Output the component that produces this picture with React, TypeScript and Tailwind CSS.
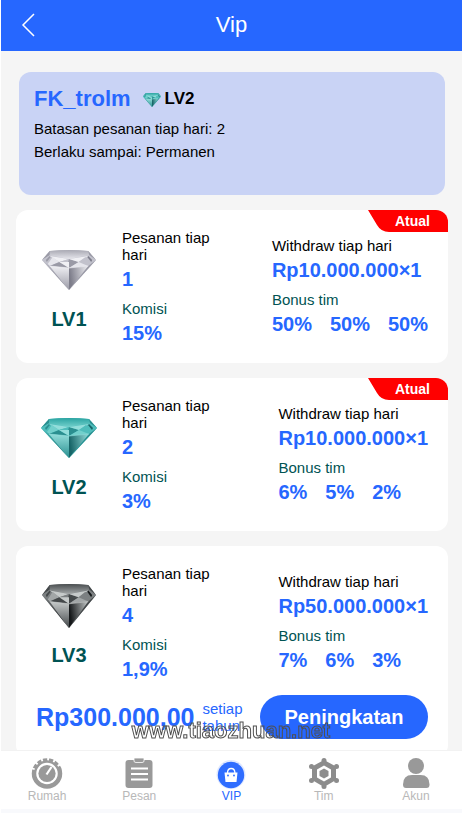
import React from "react";

type Tone = "silver" | "teal" | "black";

type Level = {
  name: string;
  orders: string;
  commission: string;
  withdraw: string;
  bonus: string[];
  tone: Tone;
  gem: string;
  current: boolean;
};

type Palette = { topDark: string; topLight: string; pale: string; mid: string; dark: string; deep: string };

const palettes: Record<Tone, Palette> = {
  silver: { topDark: "#a9a9b3", topLight: "#e6e6ec", pale: "#f0f0f4", mid: "#c2c2cc", dark: "#9a9aa6", deep: "#7d7d8a" },
  teal: { topDark: "#2aa3a1", topLight: "#72d0cc", pale: "#93dedb", mid: "#4fbdbb", dark: "#2a8f90", deep: "#176568" },
  black: { topDark: "#4a4e50", topLight: "#a2a6a7", pale: "#c6caca", mid: "#7c8082", dark: "#44484a", deep: "#15181a" },
};

function Gem({ tone, className }: { tone: Tone; className: string }) {
  const p = palettes[tone];
  const id = React.useId();
  return (
    <svg viewBox="0 0 56 40" preserveAspectRatio="none" className={className} aria-hidden="true">
      <defs>
        <linearGradient id={`${id}t`} x1="0" y1="0" x2="0" y2="1">
          <stop offset="0" stopColor={p.topDark} />
          <stop offset="1" stopColor={p.topLight} />
        </linearGradient>
        <linearGradient id={`${id}l`} x1="0" y1="0" x2="0" y2="1">
          <stop offset="0" stopColor={p.pale} />
          <stop offset="1" stopColor={p.dark} />
        </linearGradient>
        <linearGradient id={`${id}r`} x1="0" y1="0.2" x2="1" y2="0">
          <stop offset="0" stopColor={p.deep} />
          <stop offset="1" stopColor={p.pale} />
        </linearGradient>
        <linearGradient id={`${id}e`} x1="0" y1="0" x2="1" y2="1">
          <stop offset="0" stopColor={p.mid} />
          <stop offset="1" stopColor={p.deep} />
        </linearGradient>
      </defs>
      <path d="M0 10 8 1Q28-1 48 1L56 10 28 40Z" fill={p.mid} />
      <path d="M8 1Q28-1 48 1L50 5 28 9 6 5Z" fill={`url(#${id}t)`} />
      <path d="M8 1 0 10 8 5Z" fill={p.dark} />
      <path d="M48 1 56 10 49 5Z" fill={p.dark} />
      <path d="M0 10 7 6 11 7 6 14Z" fill={p.mid} />
      <path d="M4 10 8 6 9 7 5 12Z" fill={p.dark} />
      <path d="M56 10 49 6 45 7 50 14Z" fill={p.mid} />
      <path d="M52 10 48 6 47 7 51 12Z" fill={p.deep} />
      <path d="M8 6 28 9 18 12Z" fill={p.pale} />
      <path d="M11 7 18 12 8 16 6 14Z" fill={p.topLight} />
      <path d="M18 12 28 9 26 13Z" fill={p.mid} />
      <path d="M28 9 38 12 27 13Z" fill={p.dark} />
      <path d="M28 9 48 6 38 12Z" fill={p.pale} />
      <path d="M45 7 50 14 48 16 38 12Z" fill={p.mid} />
      <path d="M18 12 8 16 28 18Z" fill={p.dark} />
      <path d="M18 12 28 12 28 18Z" fill={p.pale} />
      <path d="M28 12 38 12 28 18Z" fill={p.dark} />
      <path d="M38 12 48 16 28 18Z" fill={p.topLight} />
      <path d="M0 10 8 16 28 40Z" fill={`url(#${id}e)`} />
      <path d="M8 16 28 18 28 40Z" fill={`url(#${id}l)`} />
      <path d="M28 18 48 16 28 40Z" fill={`url(#${id}r)`} />
      <path d="M56 10 48 16 28 40Z" fill={p.dark} />
      <path d="M8 16 28 18 48 16" fill="none" stroke={p.pale} strokeWidth="0.6" />
    </svg>
  );
}

const levels: Level[] = [
  { name: "LV1", orders: "1", commission: "15%", withdraw: "Rp10.000.000×1", bonus: ["50%", "50%", "50%"], tone: "silver", gem: "h-10 w-[54px]", current: true },
  { name: "LV2", orders: "2", commission: "3%", withdraw: "Rp10.000.000×1", bonus: ["6%", "5%", "2%"], tone: "teal", gem: "h-10 w-14", current: true },
  { name: "LV3", orders: "4", commission: "1,9%", withdraw: "Rp50.000.000×1", bonus: ["7%", "6%", "3%"], tone: "black", gem: "h-11 w-[54px]", current: false },
];

function CurrentRibbon() {
  return (
    <div className="absolute top-0 right-0 h-[22px] w-20">
      <svg viewBox="0 0 80 22" className="absolute inset-0 size-full" aria-hidden="true">
        <path d="M0 0H80V22H21Q13 22 9 15Z" fill="#ff0000" />
      </svg>
      <span className="absolute inset-0 pl-[27px] text-[14px] leading-[22px] font-bold text-white">
        Atual
      </span>
    </div>
  );
}

function LevelCard({ level, children }: { level: Level; children?: React.ReactNode }) {
  return (
    <section className="relative overflow-hidden rounded-xl bg-white pb-[18px]">
      {level.current && <CurrentRibbon />}
      <div className="flex pt-[19px] pr-5">
        <div className="flex w-[106px] shrink-0 flex-col items-center pt-4">
          <div className="flex h-[50px] items-center">
            <Gem tone={level.tone} className={level.gem} />
          </div>
          <h2 className="mt-3 text-xl leading-6 font-bold text-[#005353]">{level.name}</h2>
        </div>
        <dl className="w-[106px] shrink-0">
          <dt className="text-[15px] leading-[17px]">Pesanan tiap hari</dt>
          <dd className="mt-1 text-xl leading-6 font-bold text-[#2667ff]">{level.orders}</dd>
          <dt className="mt-[9px] text-[15px] leading-[17px] text-[#005353]">Komisi</dt>
          <dd className="mt-1 text-xl leading-6 font-bold text-[#2667ff]">{level.commission}</dd>
        </dl>
        <dl className="mt-2 ml-auto">
          <dt className="text-[15px] leading-[17px]">Withdraw tiap hari</dt>
          <dd className="mt-1 text-xl leading-6 font-bold text-[#2667ff]">{level.withdraw}</dd>
          <dt className="mt-[9px] text-[15px] leading-[17px] text-[#005353]">Bonus tim</dt>
          <dd className="mt-1 flex gap-[18px] text-xl leading-6 font-bold text-[#2667ff]">
            {level.bonus.map((b, i) => (
              <span key={i}>{b}</span>
            ))}
          </dd>
        </dl>
      </div>
      {children}
    </section>
  );
}

function HomeIcon() {
  return (
    <svg viewBox="0 0 32 32" className="size-8" fill="none" aria-hidden="true">
      <circle cx="16" cy="16.500" r="13" stroke="#999" strokeWidth="4.500" />
      <path d="M1.500 12.500A15 15 0 0 1 30.500 12.500" stroke="#fff" strokeWidth="4" strokeDasharray="2 4.600" />
      <circle cx="16" cy="16.500" r="8.600" fill="#999" />
      <path d="M15.500 17.500 20.500 10" stroke="#fff" strokeWidth="2.200" />
    </svg>
  );
}

function OrderIcon() {
  return (
    <svg viewBox="0 0 32 32" className="size-8" aria-hidden="true">
      <rect x="2.500" y="3" width="27" height="28" rx="3" fill="#999" />
      <path d="M11 1h10v3q0 1.500-2 1.500h-6q-2 0-2-1.500z" fill="#999" stroke="#fff" strokeWidth="0.8" />
      <path d="M8 11.500h17M8 17h17M8 22.500h17" stroke="#fff" strokeWidth="2" />
    </svg>
  );
}

function VipIcon() {
  return (
    <svg viewBox="0 0 32 32" className="size-8" fill="none" aria-hidden="true">
      <circle cx="16" cy="17.500" r="14.500" fill="#2667ff" opacity="0.15" />
      <circle cx="16" cy="18" r="13.200" fill="#2f6dff" />
      <path d="M12.500 16q0-4.500 3.700-4.500t3.700 4.500" stroke="#fff" strokeWidth="1.300" />
      <path d="M9.500 15.500h13l-1 9.500H10.500z" fill="#fff" />
      <circle cx="13" cy="18.500" r="0.900" fill="#2667ff" />
      <circle cx="19" cy="18.500" r="0.900" fill="#2667ff" />
    </svg>
  );
}

function TeamIcon() {
  return (
    <svg viewBox="0 0 32 32" className="size-8" aria-hidden="true">
      <path d="M16 3 28 9.500V23L16 30 4 23V9.500Z" fill="#8c8c8c" />
      <path d="m16 8.500 7 4v8l-7 4-7-4v-8Z" fill="#fff" />
      <path d="m16 11.500 4.500 2.500v5L16 21.500 11.500 19v-5Z" fill="#8c8c8c" />
      <g fill="#8c8c8c">
        <circle cx="16" cy="3.500" r="2.500" />
        <circle cx="28.500" cy="9.500" r="2.500" />
        <circle cx="28.500" cy="23.500" r="2.500" />
        <circle cx="16" cy="29.500" r="2.500" />
        <circle cx="3.500" cy="23.500" r="2.500" />
        <circle cx="3.500" cy="9.500" r="2.500" />
      </g>
    </svg>
  );
}

function AccountIcon() {
  return (
    <svg viewBox="0 0 32 32" className="size-8" fill="#999" aria-hidden="true">
      <circle cx="16" cy="9" r="8" />
      <path d="M3 27.500q0-9.500 9-9.500h8.500q9 0 9 9.500 0 3.500-3 3.500H6q-3 0-3-3.500Z" />
    </svg>
  );
}

const tabs = [
  { label: "Rumah", Icon: HomeIcon, active: false },
  { label: "Pesan", Icon: OrderIcon, active: false },
  { label: "VIP", Icon: VipIcon, active: true },
  { label: "Tim", Icon: TeamIcon, active: false },
  { label: "Akun", Icon: AccountIcon, active: false },
];

export default function App() {
  return (
    <div className="flex h-screen flex-col overflow-hidden border-l border-white bg-[#f5f5f5] font-['Liberation_Sans',Arial,sans-serif] text-black">
      <header className="grid h-[51px] shrink-0 grid-cols-[1fr_auto_1fr] items-center bg-[#2667ff] pb-0.5 text-white">
        <button type="button" aria-label="Kembali" className="flex h-full w-12 items-center pl-5">
          <svg viewBox="0 0 14 24" className="h-6 w-3.5" fill="none" aria-hidden="true">
            <path d="M13 1 2 12 13 23" stroke="currentColor" strokeWidth="1.500" />
          </svg>
        </button>
        <h1 className="text-[22px] leading-7">Vip</h1>
      </header>

      <main className="min-h-0 flex-1 overflow-hidden px-[15px] pr-[14px] pt-[21px]">
        <section className="mx-[3px] h-[123px] rounded-xl bg-[#c9d3f5] px-[15px] pt-3">
          <div className="flex items-center">
            <h2 className="text-[22px] leading-[30px] font-bold text-[#2667ff]">FK_trolm</h2>
            <Gem tone="teal" className="mt-0.5 ml-3 h-3.5 w-[18px]" />
            <span className="ml-1 text-[17px] font-bold">LV2</span>
          </div>
          <p className="mt-[3px] text-[15px] leading-[23px]">Batasan pesanan tiap hari: 2</p>
          <p className="text-[15px] leading-[23px]">Berlaku sampai: Permanen</p>
        </section>

        <div className="mt-[15px] flex flex-col gap-[15px]">
          {levels.map((level) => (
            <LevelCard key={level.name} level={level}>
              {!level.current && (
                <div className="mt-3.5 flex items-center pr-5 pl-5">
                  <strong className="text-[25px] leading-8 text-[#2667ff]">Rp300.000,00</strong>
                  <span className="ml-2 w-12 text-[15px] leading-[17px] text-[#2667ff]">setiap tahun</span>
                  <button type="button" className="ml-auto h-11 w-[168px] rounded-full bg-[#2667ff] text-xl font-bold text-white">
                    Peningkatan
                  </button>
                </div>
              )}
            </LevelCard>
          ))}
        </div>
      </main>

      <nav className="grid h-[63px] shrink-0 grid-cols-5 border-t border-b-4 border-t-[#f2f2f2] border-b-[#f8f9fc] bg-white">
        {tabs.map(({ label, Icon, active }) => (
          <a
            key={label}
            href={`#${label.toLowerCase()}`}
            className={active ? "flex flex-col items-center pt-1.5 text-xs leading-[14px] text-[#2667ff]" : "flex flex-col items-center pt-1.5 text-xs leading-[14px] text-[#b8b8b8]"}
          >
            <Icon />
            {label}
          </a>
        ))}
      </nav>

      <div className="pointer-events-none fixed inset-x-0 bottom-[70px] text-center text-[22px] leading-6 font-bold text-transparent [-webkit-text-stroke:1px_#505050]">
        www.tiaozhuan.net
      </div>
    </div>
  );
}
